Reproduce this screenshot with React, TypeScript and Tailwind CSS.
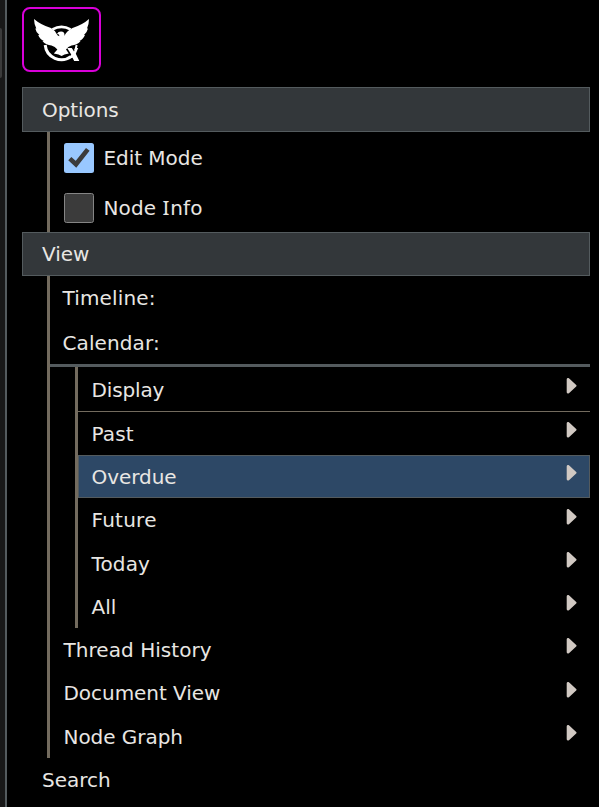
import React from 'react';
import clsx from 'clsx';

function Arrow({ className }: { className: string }) {
  return (
    <svg className={clsx('ml-auto h-[18px] w-[12px] shrink-0', className)} viewBox="0 0 12 18">
      <path d="M0.7 2.2 Q0.7 0.8 2.5 1 L3.5 1.8 L10.2 7.9 Q11.1 8.7 10.2 9.6 L3.5 15.8 L2.5 16.6 Q0.7 16.8 0.7 15.2Z" fill="#d1c9c3" />
    </svg>
  );
}

function Logo() {
  return (
    <svg className="h-[46px] w-[57px]" viewBox="0 0 57 46" fill="#fff">
      <path d="M19.5 12.4 Q28.5 7.4 37.5 12.4" fill="none" stroke="#fff" strokeWidth="2.8" />
      <path d="M12.2 28 A16.3 16.3 0 0 0 38.2 39.4" fill="none" stroke="#fff" strokeWidth="3" />
      <path d="M43.6 28 Q43 31.5 42 33.5" fill="none" stroke="#fff" strokeWidth="2" />
      <path d="M1 2 Q8 8 18 11 Q22.5 13.5 24.5 18.2 L26.3 19.3 L26 17.4 L24 17 Q25 14.6 28 14.6 Q31.8 14.8 31.5 18.5 L31.3 19.3 Q33 14.5 39.5 11 Q50 7.5 56 2 Q56 7 54 11.5 L55 11.5 Q54 15.5 51 18 L52 18 Q50 22.5 46.5 24 L47.5 24.3 Q44 28.3 38.5 28.4 Q35 29.5 33 32.5 L35.8 36.4 L31.5 37.4 L28.6 39 L25.5 37.4 L20.8 36.4 L24.4 32.5 Q22 29.5 18.5 28.4 Q13 28.3 9.5 24.3 L10.8 24 Q7 22.5 5.2 18 L6.4 18 Q3 15.5 2.3 11.5 L3.3 11.5 Q1 6.5 1 2Z" />
      <path d="M34.2 31 L38.8 31 L41 34.6 L42.6 31 L45.2 31 L42.8 36.8 L46.3 44 L41.2 44 L39.5 40.8 L36.8 41.6 L38.2 37.5Z" />
    </svg>
  );
}

function Checkbox({ checked }: { checked?: boolean }) {
  return (
    <span className={clsx('flex size-[30px] items-center justify-center rounded-[2.5px]', checked ? 'bg-[#99c8ff]' : 'border border-[#858585] bg-[#3b3b3b]')}>
      {checked && (
        <svg className="size-[30px]" viewBox="0 0 30 30">
          <path d="M5.8 15.6 L12 21.3 L23.8 6.4" fill="none" stroke="#3b3b3b" strokeWidth="4.6" />
        </svg>
      )}
    </span>
  );
}

function Header({ label, className }: { label: string; className: string }) {
  return (
    <div className={clsx('flex items-center border border-[#545b5e] bg-[#33373a] pl-[19px]', className)}>
      <span>{label}</span>
    </div>
  );
}

function MenuRow({
  label,
  className,
  text = 'leading-[44px]',
  arrow = 'mt-[10px] mr-[12px]',
}: {
  label: string;
  className: string;
  text?: string;
  arrow?: string;
}) {
  return (
    <div className={clsx('flex', className)}>
      <span className={text}>{label}</span>
      <Arrow className={arrow} />
    </div>
  );
}

export default function App() {
  return (
    <div className="flex h-[807px] w-[599px] overflow-hidden bg-black font-['Verdana','DejaVu_Sans',sans-serif] text-[20px] whitespace-nowrap text-[#e8e6e3]">
      <div className="w-[5px] shrink-0 bg-[#181818] pt-[28px]">
        <div className="h-[50px] w-[2px] rounded-r-[2px] bg-[#3b3b3b]" />
      </div>
      <div className="w-[2px] shrink-0 bg-[#545b5e]" />
      <main className="ml-[15px] w-[568px] pt-[7px]">
        <div className="flex h-[65px] w-[79px] items-center justify-center rounded-[8px] border-2 border-[#d900d9]">
          <Logo />
        </div>
        <Header label="Options" className="mt-[15px] h-[45px] tracking-[-0.08px]" />
        <div className="ml-[25px] h-[100px] border-l-[3px] border-[#736b5e] pl-[14px]">
          <label className="flex h-[50px] items-center gap-[9.5px] pt-[2px]">
            <Checkbox checked />
            <span className="tracking-[-0.05px]">Edit Mode</span>
          </label>
          <label className="flex h-[50px] items-center gap-[9.5px] pt-[2px]">
            <Checkbox />
            <span className="tracking-[0.1px]">
              Node <span className="font-['Noto_Sans',sans-serif] text-[20.5px] leading-none tracking-[0.8px]">I</span>nfo
            </span>
          </label>
        </div>
        <Header label="View" className="h-[44px]" />
        <div className="ml-[25px] h-[482px] border-l-[3px] border-[#736b5e]">
          <div className="h-[44px] pl-[12.5px] leading-[44px] tracking-[0.15px]">Timeline:</div>
          <div className="h-[47px] border-b-[3px] border-[#545b5e] pl-[12.5px] leading-[46px] tracking-[0.1px]">Calendar:</div>
          <div className="ml-[25px] h-[261px] border-l-[3px] border-[#736b5e]">
            <MenuRow label="Display" className="h-[45px] border-b border-[#736b5e] pl-[13.5px]" text="leading-[46px] tracking-[-0.15px]" />
            <MenuRow label="Past" className="h-[43px] pl-[13.5px]" text="leading-[44px] tracking-[0.15px]" arrow="mt-[9px] mr-[12px]" />
            <MenuRow label="Overdue" className="h-[43px] border border-[#545b5e] bg-[#2d4866] pl-[12.5px]" text="leading-[42px] tracking-[-0.05px]" arrow="mt-[8px] mr-[11px]" />
            <MenuRow label="Future" className="h-[43px] pl-[13.5px]" text="leading-[44px] tracking-[0.25px]" />
            <MenuRow label="Today" className="h-[44px] pl-[13.5px]" text="leading-[46px] tracking-[0.15px]" />
            <MenuRow label="All" className="h-[43px] pl-[13.5px]" arrow="mt-[9px] mr-[12px]" />
          </div>
          <MenuRow label="Thread History" className="h-[43px] pl-[13.5px]" text="leading-[44px] tracking-[0.05px]" arrow="mt-[9px] mr-[12px]" />
          <MenuRow label="Document View" className="h-[44px] pl-[13.5px]" text="leading-[44px] tracking-[-0.04px]" />
          <MenuRow label="Node Graph" className="h-[43px] pl-[13.5px]" text="leading-[44px] tracking-[-0.05px]" arrow="mt-[9px] mr-[12px]" />
        </div>
        <div className="h-[44px] pl-[20px] leading-[44px]">Search</div>
      </main>
    </div>
  );
}
